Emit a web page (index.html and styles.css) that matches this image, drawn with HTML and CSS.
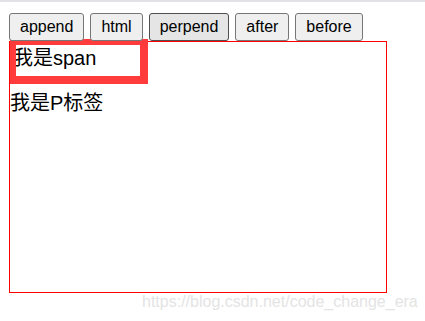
FILE: index.html
```html
<!DOCTYPE html>
<html lang="zh">
<head>
  <meta charset="UTF-8">
  <title>jQuery 插入节点</title>
  <link rel="stylesheet" href="styles.css">
</head>
<body>
  <div class="topline"></div>
  <div class="page">
    <div class="btns">
      <button class="btn">append</button>
      <button class="btn">html</button>
      <button class="btn btn-hover">perpend</button>
      <button class="btn">after</button>
      <button class="btn">before</button>
    </div>
    <div class="box">
      <span class="tag">我是span</span>
      <p class="ptag">我是P标签</p>
    </div>
  </div>
  <div class="mark">https://blog.csdn.net/code_change_era</div>
</body>
</html>
```

FILE: styles.css
```css
body { margin: 0; font-family: "Liberation Sans", Arial, "Noto Sans CJK SC", sans-serif; background: #fff; color: #000; }
.topline { height: 2px; background: #e1e2e5; }
.page { padding: 11px 0 0 9px; }
.btns { display: flex; gap: 6px; }
.btn { font-family: "Liberation Sans", Arial, sans-serif; font-size: 16px; height: 28px; padding: 0 10px;
       background: #efefef; border: 1px solid #767676; border-radius: 3px; color: #000; }
.btn-hover { background: #e5e5e5; border-color: #4f4f4f; }
.box { width: 376px; height: 250px; border: 1px solid #ff0000; }
.tag { display: block; width: 124px; height: 31px; margin-top: -3px; border-style: solid; border-color: #ff3b3b;
       border-width: 6px 8px 8px 6px; font-size: 20px; line-height: 27px; text-indent: -3px; overflow: hidden;
       white-space: nowrap; }
.ptag { margin: 6px 0 0 0; font-size: 20px; line-height: 26px; }
.mark { position: absolute; left: 142px; top: 293px; font-size: 16px; color: #e4e4e4; }
```
